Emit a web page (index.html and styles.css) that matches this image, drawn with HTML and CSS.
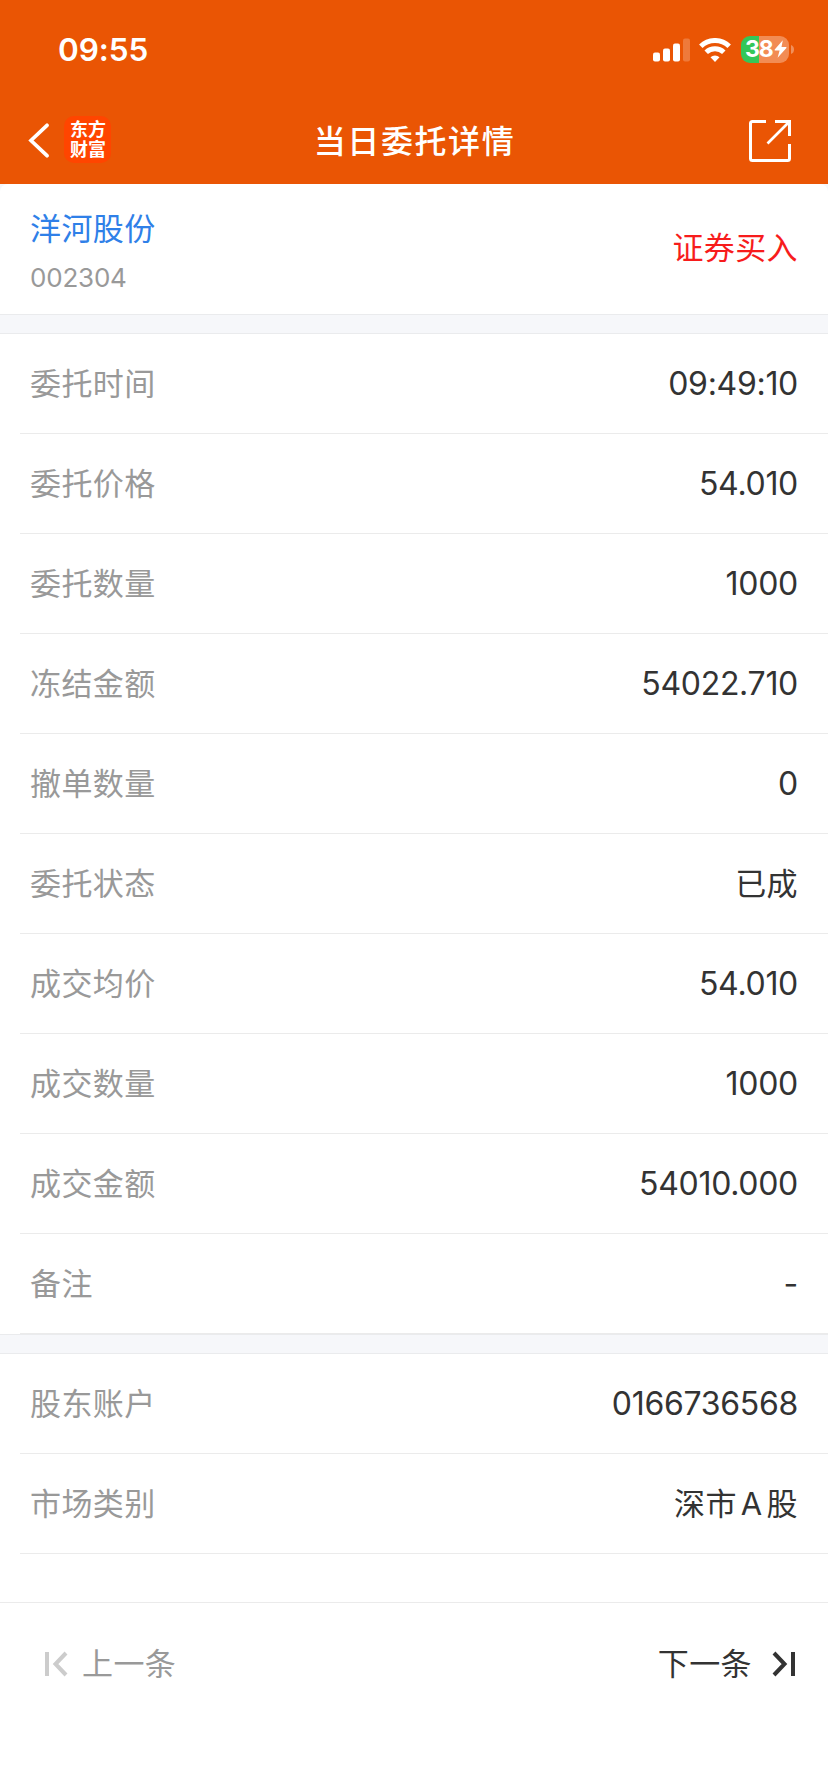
FILE: index.html
```
<!DOCTYPE html>
<html lang="zh-CN">
<head>
<meta charset="utf-8">
<title>当日委托详情</title>
<link rel="stylesheet" href="styles.css">
</head>
<body>
<div class="screen">
  <header class="header">
    <div class="status">
      <span class="clock">09:55</span>
      <div class="indicators">
        <svg class="signal" width="37" height="24" viewBox="0 0 37 24" fill="#fff">
          <rect x="0" y="14.500" width="7" height="9" rx="2"/>
          <rect x="10" y="10.500" width="7" height="13" rx="2"/>
          <rect x="20" y="5.500" width="7" height="18" rx="2"/>
          <rect x="30" y="0.500" width="7" height="23" rx="2" opacity=".22"/>
        </svg>
        <svg class="wifi" width="32" height="24" viewBox="0 0 32 24" fill="none" stroke="#fff">
          <path d="M1.800 8.200a20.500 20.500 0 0 1 28.400 0" stroke-width="5"/>
          <path d="M7.200 14.300a12.800 12.800 0 0 1 17.600 0" stroke-width="5"/>
          <path d="M11.500 19.300a6.500 6.500 0 0 1 9 0L16 24z" fill="#fff" stroke="none"/>
        </svg>
        <div class="battery">
          <div class="battery-body">
            <span>38</span>
            <svg width="13" height="18" viewBox="0 0 13 18" fill="#fff"><path d="M8.800.200.700 9.600q-.4.900.4.900h4.500L3.600 17.800 12.400 8q.4-.9-.4-.9H7.500z"/></svg>
          </div>
          <svg width="3" height="9" viewBox="0 0 3 9"><path d="M0 0q3 1 3 4.500T0 9z" fill="#fff" opacity=".35"/></svg>
        </div>
      </div>
    </div>
    <nav class="nav">
      <div class="nav-left">
        <svg width="22" height="36" viewBox="0 0 22 36" fill="none" stroke="#fff" stroke-width="3.700"><path d="M19 2.300 3 17.500 19 32.700" stroke-linecap="round"/></svg>
        <div class="logo">东方财富</div>
      </div>
      <h1 class="title">当日委托详情</h1>
      <svg class="share" width="42" height="42" viewBox="0 0 42 42" fill="none" stroke="#fff" stroke-width="3"><path d="M17 1.500H3.500q-2 0-2 2v35q0 2 2 2h35q2 0 2-2V24M26 1.500h14.500V16"/><path d="M40 2 18.500 23.500" stroke-width="2.600"/></svg>
    </nav>
  </header>

  <div class="summary-wrap">
    <section class="summary">
      <div>
        <div class="stock-name">洋河股份</div>
        <div class="stock-code">002304</div>
      </div>
      <div class="side">证券买入</div>
    </section>
  </div>

  <div class="band"></div>
  <section class="rows">
    <div class="row"><span class="label">委托时间</span><span class="num">09:49:10</span></div>
    <div class="row"><span class="label">委托价格</span><span class="num">54.010</span></div>
    <div class="row"><span class="label">委托数量</span><span class="num">1000</span></div>
    <div class="row"><span class="label">冻结金额</span><span class="num">54022.710</span></div>
    <div class="row"><span class="label">撤单数量</span><span class="num">0</span></div>
    <div class="row"><span class="label">委托状态</span><span class="text">已成</span></div>
    <div class="row"><span class="label">成交均价</span><span class="num">54.010</span></div>
    <div class="row"><span class="label">成交数量</span><span class="num">1000</span></div>
    <div class="row"><span class="label">成交金额</span><span class="num">54010.000</span></div>
    <div class="row"><span class="label">备注</span><span class="num">-</span></div>
  </section>
  <div class="band"></div>
  <section class="rows">
    <div class="row"><span class="label">股东账户</span><span class="num">0166736568</span></div>
    <div class="row"><span class="label">市场类别</span><span class="text">深市<span class="latin">A</span>股</span></div>
  </section>

  <footer class="pager">
    <div class="prev">
      <svg width="24" height="26" viewBox="0 0 24 26" fill="none" stroke="#ccc" stroke-width="4"><path d="M3 1v24M22 2 11.500 13 22 24"/></svg>
      <span class="pager-text">上一条</span>
    </div>
    <div class="next">
      <span class="pager-text">下一条</span>
      <svg width="24" height="26" viewBox="0 0 24 26" fill="none" stroke="#333" stroke-width="4"><path d="M22 1v24M3 2l10.500 11L3 24"/></svg>
    </div>
  </footer>
</div>
</body>
</html>
```
FILE: styles.css
```
* { box-sizing: border-box; }
body {
  margin: 0;
  background: #fff;
  font-family: "Noto Sans CJK SC", sans-serif;
  color: #333;
}
svg { display: block; flex: none; }
.screen {
  width: 828px;
  height: 1792px;
  display: flex;
  flex-direction: column;
  background: #fff;
}
.header { height: 184px; background: #ea5504; color: #fff; }
.status {
  height: 98px;
  padding: 2px 34px 0 58px;
  display: flex;
  align-items: center;
  justify-content: space-between;
}
.clock { font: 600 31.500px/40px Inter, sans-serif; letter-spacing: -0.1px; }
.indicators { display: flex; align-items: center; }
.signal, .wifi { margin-top: -1px; }
.wifi { margin-left: 9px; }
.battery { display: flex; align-items: center; gap: 2px; margin: -2px 0 0 10px; }
.battery-body {
  width: 48px;
  height: 27px;
  border-radius: 9px;
  background: linear-gradient(90deg, #34c759 18px, #f28c54 18px);
  display: flex;
  align-items: center;
  padding-left: 4px;
  gap: 1px;
  font: 700 23px/27px Inter, sans-serif;
  letter-spacing: -1px;
}
.nav {
  height: 86px;
  padding: 0 37px 0 28px;
  display: grid;
  grid-template-columns: 1fr auto 1fr;
  align-items: center;
}
.nav-left { display: flex; align-items: center; gap: 14px; }
.logo {
  width: 47px;
  height: 47px;
  margin-top: -3px;
  padding: 2px 5px 5px 6px;
  border-radius: 10px;
  background: #ff4500;
  font-size: 18px;
  font-weight: 700;
  line-height: 20px;
}
.title {
  margin: 0;
  padding: 0 0 5px 10px;
  font-size: 32px;
  font-weight: 500;
  line-height: 48px;
  letter-spacing: 1.6px;
}
.share { justify-self: end; }
.summary-wrap { background: #f6f7fa; }
.summary {
  height: 130px;
  padding: 0 30px;
  display: flex;
  align-items: center;
  justify-content: space-between;
  background: #fff;
  border-radius: 8px 8px 0 0;
}
.stock-name { font-size: 31px; line-height: 44px; letter-spacing: 0.4px; color: #2f80e8; }
.stock-code { font: 400 26px/32px Inter, sans-serif; letter-spacing: -0.2px; color: #999; padding-top: 13px; }
.side { font-size: 31px; letter-spacing: 0.4px; color: #f71c1c; padding-bottom: 7px; }
.band {
  height: 20px;
  background: #f6f7fa;
  border-top: 1px solid #eaebed;
  border-bottom: 1px solid #eaebed;
}
.row {
  height: 100px;
  margin-left: 20px;
  padding: 0 30px 0 10px;
  border-bottom: 1px solid #ebebeb;
  display: flex;
  align-items: center;
  justify-content: space-between;
}
.label, .text { font-size: 31px; letter-spacing: 0.4px; padding-bottom: 4px; }
.label { color: #999; }
.num { font: 400 32px/40px Inter, sans-serif; letter-spacing: -0.3px; padding-top: 1px; }
.latin { font-family: Inter, sans-serif; padding: 0 4px; }
.pager {
  height: 190px;
  margin-top: 48px;
  padding: 38px 33px 0 44px;
  border-top: 1px solid #ebebeb;
  display: flex;
  align-items: flex-start;
  justify-content: space-between;
  font-size: 31px;
  line-height: 46px;
  letter-spacing: 0.4px;
}
.prev, .next { display: flex; align-items: center; }
.pager-text { margin: -2px 0 2px; }
.prev { gap: 14px; color: #999; }
.next { gap: 19px; }
```
